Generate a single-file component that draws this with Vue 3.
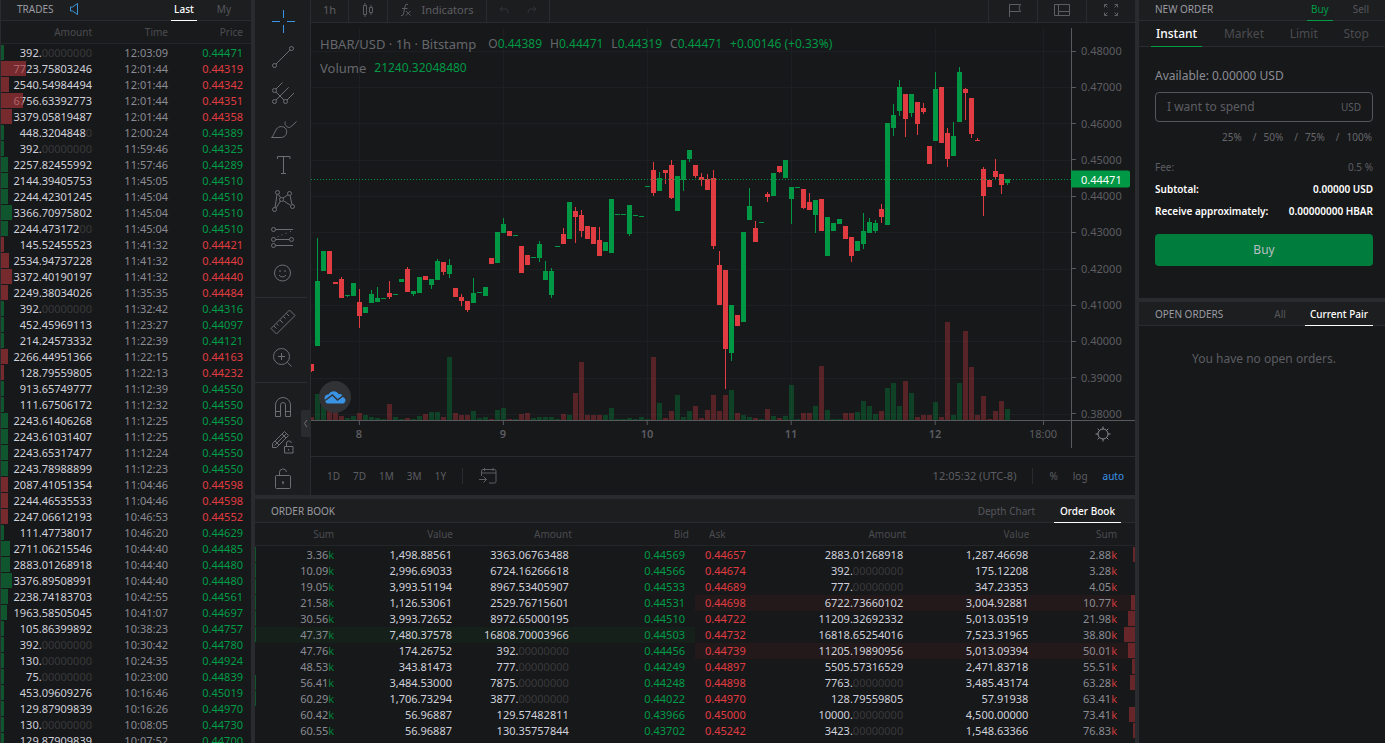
<script setup>
import { ref } from 'vue'

const spend = ref('')

const trades = `g 392.00000000 12:03:09 0.44471
r 7723.75803246 12:01:44 0.44319
r 2540.54984494 12:01:44 0.44342
r 6756.63392773 12:01:44 0.44351
r 3379.05819487 12:01:44 0.44358
g 448.32048480 12:00:24 0.44389
g 392.00000000 11:59:46 0.44325
g 2257.82455992 11:57:46 0.44289
g 2144.39405753 11:45:05 0.44510
g 2244.42301245 11:45:04 0.44510
g 3366.70975802 11:45:04 0.44510
g 2244.47317200 11:45:04 0.44510
r 145.52455523 11:41:32 0.44421
r 2534.94737228 11:41:32 0.44440
r 3372.40190197 11:41:32 0.44440
r 2249.38034026 11:35:35 0.44484
g 392.00000000 11:32:42 0.44316
g 452.45969113 11:23:27 0.44097
g 214.24573332 11:22:39 0.44121
r 2266.44951366 11:22:15 0.44163
r 128.79559805 11:22:13 0.44232
g 913.65749777 11:12:39 0.44550
g 111.67506172 11:12:32 0.44550
g 2243.61406268 11:12:25 0.44550
g 2243.61031407 11:12:25 0.44550
g 2243.65317477 11:12:24 0.44550
g 2243.78988899 11:12:23 0.44550
r 2087.41051354 11:04:46 0.44598
r 2244.46535533 11:04:46 0.44598
r 2247.06612193 10:46:53 0.44552
g 111.47738017 10:46:20 0.44629
g 2711.06215546 10:44:40 0.44485
g 2883.01268918 10:44:40 0.44480
g 3376.89508991 10:44:40 0.44480
g 2238.74183703 10:42:55 0.44561
g 1963.58505045 10:41:07 0.44697
g 105.86399892 10:38:23 0.44757
g 392.00000000 10:30:42 0.44780
g 130.00000000 10:24:35 0.44924
g 75.00000000 10:23:00 0.44839
g 453.09609276 10:16:46 0.45019
g 129.87909839 10:16:26 0.44970
g 130.00000000 10:08:05 0.44730
g 129.87909839 10:07:52 0.44700`.split('\n').map((line) => {
  const [side, amount, time, price] = line.split(' ')
  return { side, ...splitZeros(amount), time, price, bar: Math.max(3, Math.round(parseFloat(amount) / 307)) }
})

function splitZeros(text) {
  const [, lead, zeros] = text.match(/^(.*?)(0*)$/)
  return { lead, zeros }
}

const parseBook = (text) => text.split('\n').map((line) => {
  const [sum, value, amount, price, bar, hot] = line.split(' ')
  return { sum, value, ...splitZeros(amount), price, bar: Number(bar), hot: hot === '*' }
})

const bids = parseBook(`3.36 1,498.88561 3363.06763488 0.44569 1
10.09 2,996.69033 6724.16266618 0.44566 1
19.05 3,993.51194 8967.53405907 0.44533 1
21.58 1,126.53061 2529.76715601 0.44531 1
30.56 3,993.72652 8972.65000195 0.44510 1
47.37 7,480.37578 16808.70003966 0.44503 1 *
47.76 174.26752 392.00000000 0.44456 0
48.53 343.81473 777.00000000 0.44249 0
56.41 3,484.53000 7875.00000000 0.44248 1
60.29 1,706.73294 3877.00000000 0.44022 1
60.42 56.96887 129.57482811 0.43966 0
60.55 56.96887 130.35757844 0.43702 0`)

const asks = parseBook(`2.88 1,287.46698 2883.01268918 0.44657 2
3.28 175.12208 392.00000000 0.44674 0
4.05 347.23353 777.00000000 0.44689 0
10.77 3,004.92881 6722.73660102 0.44698 4 *
21.98 5,013.03519 11209.32692332 0.44722 7
38.80 7,523.31965 16818.65254016 0.44732 11
50.01 5,013.09394 11205.19890956 0.44739 7 *
55.51 2,471.83718 5505.57316529 0.44897 3
63.28 3,485.43174 7763.00000000 0.44898 5
63.41 57.91938 128.79559805 0.44970 0
73.41 4,500.00000 10000.00000000 0.45000 6
76.83 1,548.63366 3423.00000000 0.45242 2`)

// One entry per hour: side, wick top, body top, body bottom, wick bottom, volume height.
const candles = `r 364 364 371 372 3|g 238 281 346 346 26|g 251 251 271 271 22|r 251 251 274 274 12|r 282 282 284 284 8|r 277 279 298 298 4
g 295 295 296 297 2|g 283 283 296 296 4|r 289 302 316 328 7|g 307 307 313 313 5|g 290 294 303 303 3|g 287 298 302 302 2
g 298 298 299 299 1|r 281 293 297 299 16|g 294 294 295 295 3|g 279 279 282 282 1|r 267 269 292 292 2|g 291 291 294 296 1
g 277 277 293 293 4|r 276 276 280 280 6|g 279 279 285 289 8|g 259 261 280 280 8|r 262 262 272 275 3|g 259 265 274 278 63
r 288 288 297 297 7|r 294 297 301 306 5|r 301 301 310 312 5|g 278 293 303 303 9|g 292 292 293 293 2|g 287 287 296 296 3
r 258 258 264 264 1|g 232 232 263 263 10|g 218 224 233 233 12|r 231 231 236 236 1|g 235 235 236 236 1|r 246 246 273 273 6
r 255 255 265 265 7|g 257 257 258 258 2|g 241 244 258 262 3|g 261 271 280 280 3|g 268 271 295 298 3|g 246 246 247 247 1
r 228 234 244 244 6|g 202 202 239 239 5|r 207 211 217 243 27|r 210 215 231 237 58|r 226 226 239 239 5|r 227 227 244 244 5
r 227 240 256 256 5|g 242 242 251 251 5|g 199 199 253 253 12|g 214 214 215 215 1|g 214 214 215 215 1|g 205 205 234 236 2
g 215 215 216 216 1|g 216 216 217 217 3|g 186 186 187 187 1|r 162 170 193 196 63|g 172 178 191 191 17|r 170 170 173 184 2
r 160 165 198 199 9|g 176 176 211 211 25|g 160 160 180 191 3|g 150 150 159 162 9|r 165 165 176 178 14|r 173 177 180 186 2
r 174 179 190 190 10|r 170 178 246 249 25|r 251 265 305 305 9|r 270 270 349 389 25|g 305 305 353 361 30|r 315 315 326 326 7
g 232 232 322 322 5|g 188 206 220 220 3|r 221 228 242 242 2|g 222 222 223 223 1|r 192 194 197 202 11|g 173 173 196 196 4
r 166 166 172 173 2|g 160 160 178 178 4|g 187 187 199 224 35|g 187 187 188 188 1|r 189 189 208 209 7|r 193 202 210 210 7
g 200 200 215 233 14|r 199 199 231 231 54|g 217 217 256 256 10|g 223 223 231 231 1|g 219 219 224 224 1|r 226 226 239 239 7
r 237 237 256 262 7|g 241 241 251 251 8|g 213 231 244 249 19|g 218 222 233 233 14|g 220 223 231 233 6|r 204 209 217 223 9
g 123 123 225 225 32|g 104 115 128 136 37|g 80 87 111 116 14|r 94 94 119 137 39|g 94 94 113 117 27|r 102 102 124 135 3
r 103 108 112 114 5|r 146 146 164 164 5|g 72 89 141 141 18|r 87 87 143 143 3|r 128 133 159 167 98|g 122 136 156 156 5
g 67 72 122 122 37|r 88 89 93 120 89|r 98 98 134 138 53|r 138 140 141 141 5|r 167 169 196 216 24|r 180 180 187 187 1
r 159 171 177 179 9|r 174 174 185 194 19|g 179 179 183 185 11`.split(/[|\n]/).map((entry, i) => {
  const [side, high, top, bottom, low, volume] = entry.split(' ')
  return { x: 6 * i, side, high: +high - 23, top: +top - 23, bottom: +bottom - 23, low: +low - 23, volume: +volume }
})

const rows = [28, 64, 100, 137, 173, 209, 246, 282, 318, 355, 391]
const prices = ['0.48000', '0.47000', '0.46000', '0.45000', '0.44000', '0.43000', '0.42000', '0.41000', '0.40000', '0.39000', '0.38000']
const times = [
  { x: 48, label: '8', bold: true }, { x: 192, label: '9', bold: true }, { x: 336, label: '10', bold: true },
  { x: 480, label: '11', bold: true }, { x: 624, label: '12', bold: true }, { x: 732, label: '18:00', bold: false }
]
const plot = { width: 760, height: 397, last: 156 }

const circles = (list) => list.map(([x, y]) => `M${x - 2} ${y}a2 2 0 1 0 4 0a2 2 0 1 0-4 0`).join('')
const tools = [
  [
    { name: 'Cross', active: true, d: 'M3 14.5h8M18 14.5h8M14.5 3v8M14.5 18v8' },
    { name: 'Trend line', d: circles([[5.5, 22.5], [22.5, 5.5]]) + 'M7 21L21 7' },
    { name: 'Pitchfork', d: circles([[5.5, 11.5], [5.5, 22.5], [16.5, 22.5]]) + 'M7 10l6.5-6.5M7 21L19.7 8.3M18 21l7-7M7 13l8 8' },
    { name: 'Brush', d: 'M2.5 22.5C5 20 5.500 17 7.500 14C10 10.500 15 11 17 14C19 18 16.500 22 12.500 22.500zM16.500 6.500C15 9 17 12.500 20.500 12.500Q22 12 27.500 6.500' },
    { name: 'Text', d: 'M8.500 8V5.500H21V8M14.500 5.500V22.500M12 22.500h5' },
    { name: 'Pattern', d: circles([[8.5, 5.5], [20.5, 6.5], [12.5, 12.5], [23.5, 19.5], [5.5, 22.5]]) + 'M8 7.500L6 20.500M7 21L11.500 14M9.500 7.500L11.500 10.500M14 11L19 7.800M14.500 13.800L21.500 18.300M21 8.500L23 17.500' },
    { name: 'Forecast', d: circles([[4.5, 6.5], [4.5, 16.5], [22.5, 16.5], [4.5, 22.5]]) + 'M6.500 6.500H24M6.500 16.500H20.500M6.500 22.500H24M8.500 13.700l1-.4M12.500 12l1-.4M16.500 10.500l1-.4M21 8.800l1-.4' },
    { name: 'Icons', d: 'M5.500 14a8 8 0 1 0 16 0a8 8 0 1 0-16 0M11 11v2M16 11v2M10 16Q13.500 20 17 16' }
  ],
  [
    { name: 'Measure', d: 'M2 20.500L20.500 2L26 7.500L7.500 26zM7.500 15.500l2 2M11 12l3 3M14.500 8.500l2 2M17.500 5.500l2.500 2.500M5 18l2.500 2.500' },
    { name: 'Zoom in', d: 'M4.500 12.500a8 8 0 1 0 16 0a8 8 0 1 0-16 0M18.500 18.500l4 4M9 12.500h7M12.500 9v7' }
  ],
  [
    { name: 'Magnet', d: 'M6.500 23.500V12a7.500 7.500 0 0 1 15 0V23.500H16.500V12a2.500 2.500 0 0 0-5 0V23.500zM6.500 18.500h5M16.500 18.500h5' },
    { name: 'Keep drawing', d: 'M3.500 18.500V14.500L15.500 2.500L19.500 6.500L7.500 18.500zM6 12L10 16M5.500 16.500L17 5M13 5l4 4M15.500 17.500h8.500v6.500h-8.500zM17.500 17.500v-2.500a2.500 2.500 0 0 1 5-1M19.500 20v1.500' },
    { name: 'Lock', d: 'M6.500 11.500q0-1 1-1h13q1 0 1 1v11q0 1-1 1h-13q-1 0-1-1zM10.500 10.500V8a3.500 3.500 0 0 1 7-1M14 16v3.500M13 17.500h2' }
  ]
]
</script>

<template>
  <div class="app">
    <section class="panel trades">
      <header class="title">
        <h2>TRADES</h2>
        <button class="sound" aria-label="Sound">
          <svg width="10" height="12" viewBox="0 0 10 12"><path d="M8.500 .5L3.500 4H1.500V8H3.500L8.500 11.500z" /></svg>
        </button>
        <nav class="tabs">
          <button class="tab on">Last</button>
          <button class="tab my">My</button>
        </nav>
      </header>
      <table>
        <colgroup><col class="c-amount"><col class="c-time"><col></colgroup>
        <thead><tr><th>Amount</th><th>Time</th><th>Price</th></tr></thead>
        <tbody>
          <tr v-for="(t, i) in trades" :key="i">
            <td class="num">{{ t.lead }}<span class="zeros">{{ t.zeros }}</span><i class="bar" :class="t.side" :style="{ width: t.bar + 'px' }"></i></td>
            <td class="time">{{ t.time }}</td>
            <td :class="['price', t.side]">{{ t.price }}</td>
          </tr>
        </tbody>
      </table>
    </section>

    <main class="center">
      <section class="panel chart">
        <div class="tools">
          <div v-for="(group, g) in tools" :key="g" class="group">
            <button v-for="t in group" :key="t.name" :aria-label="t.name" :class="{ active: t.active }">
              <svg width="28" height="28" viewBox="0 0 28 28"><path :d="t.d" /></svg>
            </button>
          </div>
          <button class="collapse" aria-label="Hide toolbar"><svg width="5" height="9" viewBox="0 0 5 9"><path d="M4 1L1.500 4.500L4 8" /></svg></button>
        </div>

        <div class="work">
          <div class="topbar">
            <button class="interval">1h</button>
            <button class="style" aria-label="Candles">
              <svg width="12" height="16" viewBox="0 0 12 16"><path d="M1.500 3.500h3v9h-3zM3 1v2.500M3 12.500V15M7.500 5.500h3v5h-3zM9 3v2.500M9 10.500V13" /></svg>
            </button>
            <button class="indicators">
              <svg width="12" height="14" viewBox="0 0 12 14"><path d="M8 1.500Q5.500 0 5 3.500L3.500 11Q3 13.500 1 12.500M2 5.500h5.500M6 8l4.500 4.500M10.500 8L6 12.500" /></svg>
              <span>Indicators</span>
            </button>
            <div class="history">
              <button aria-label="Undo"><svg width="10" height="8" viewBox="0 0 10 8"><path d="M3.500 0.500L1 3L3.500 5.500M1 3h6q2 0 2 4" /></svg></button>
              <button aria-label="Redo"><svg width="10" height="8" viewBox="0 0 10 8"><path d="M6.500 0.500L9 3L6.500 5.500M9 3H3q-2 0-2 4" /></svg></button>
            </div>
            <div class="right-tools">
              <button aria-label="Flag"><svg width="16" height="16" viewBox="0 0 16 16"><path d="M4.500 15V2.500H15.500L14 6L15.500 9.500H4.500" /></svg></button>
              <button aria-label="Layout"><svg width="16" height="16" viewBox="0 0 16 16"><path d="M.5 2.500h15v11H.5zM4.500 2.500v11M4.500 9.500h11" /></svg></button>
              <button aria-label="Fullscreen"><svg width="16" height="16" viewBox="0 0 16 16"><path d="M1.500 5.500v-3h3M1.500 2.500l3 3M14.500 5.500v-3h-3M14.500 2.500l-3 3M1.500 10.500v3h3M1.500 13.500l3-3M14.500 10.500v3h-3M14.500 13.500l-3-3" /></svg></button>
            </div>
          </div>

          <div class="canvas">
            <div class="plot">
              <svg class="drawing" :viewBox="`0 0 ${plot.width} ${plot.height}`" preserveAspectRatio="none" role="img" aria-label="HBAR/USD candles">
                <g class="grid">
                  <rect v-for="y in rows" :key="'h' + y" x="0" :y="y" :width="plot.width" height="1" />
                  <rect v-for="t in times" :key="'v' + t.x" :x="t.x" y="5" width="1" :height="plot.height" />
                </g>
                <g v-for="c in candles" :key="c.x" :class="c.side">
                  <rect class="volume" :x="c.x - 2" :y="plot.height - c.volume" width="5" :height="c.volume" />
                  <rect :x="c.x" :y="c.high" width="1" :height="c.low - c.high" />
                  <rect :x="c.x - 2" :y="c.top" width="5" :height="c.bottom - c.top" />
                </g>
                <line class="last" x1="0" :x2="plot.width" :y1="plot.last + 0.5" :y2="plot.last + 0.5" />
              </svg>
              <div class="legend">
                <p><span class="pair">HBAR/USD · 1h · Bitstamp</span><span>O<b>0.44389</b></span><span>H<b>0.44471</b></span><span>L<b>0.44319</b></span><span>C<b>0.44471</b></span><b>+0.00146 (+0.33%)</b></p>
                <p><span class="vol">Volume</span><b>21240.32048480</b></p>
              </div>
              <a class="brand" href="#" aria-label="TradingView">
                <svg width="22" height="14" viewBox="0 0 22 14"><path fill="#3a94e6" d="M1 10C-.5 7 2 4 4.500 4.500C6 1 12-.5 14.500 4C18 3.500 19 6 18.500 7C22 7.500 22.500 12 19.500 13.500H3Q1 13 1 10z" /><path fill="none" stroke="#303236" stroke-width="1.500" d="M1 10.500L8.500 5L13.500 10L20 5" /></svg>
              </a>
            </div>
            <div class="prices">
              <ul><li v-for="p in prices" :key="p">{{ p }}</li></ul>
              <span class="tag" :style="{ top: (plot.last / plot.height) * 100 + '%' }">0.44471</span>
            </div>
            <div class="times">
              <span v-for="t in times" :key="t.x" :class="{ bold: t.bold }" :style="{ left: (t.x / plot.width) * 100 + '%' }">{{ t.label }}</span>
            </div>
            <div class="corner">
              <button aria-label="Chart settings"><svg width="16" height="16" viewBox="0 0 16 16"><circle cx="8" cy="8" r="5" /><path d="M8 .5v2.500M8 13v2.500M.5 8H3M13 8h2.500M2.700 2.700l1.800 1.800M11.500 11.500l1.800 1.800M2.700 13.300l1.800-1.800M11.500 4.500l1.800-1.800" /></svg></button>
            </div>
          </div>

          <div class="footbar">
            <div class="ranges"><button v-for="r in ['1D', '7D', '1M', '3M', '1Y']" :key="r">{{ r }}</button></div>
            <button class="goto" aria-label="Go to date"><svg width="18" height="18" viewBox="0 0 18 18"><path d="M2.500 9V4q0-1.500 1.500-1.500H15.500Q17 2.500 17 4V14.500Q17 16 15.500 16H10M2.500 6h14.500M5.500 1v3M14 1v3M0 12.500h7M4.500 9.500l3 3l-3 3" /></svg></button>
            <button class="clock">12:05:32 (UTC-8)</button>
            <div class="scales"><button>%</button><button>log</button><button class="auto">auto</button></div>
          </div>
        </div>
      </section>

      <section class="panel book">
        <header class="title">
          <h2>ORDER BOOK</h2>
          <nav class="tabs">
            <button class="tab">Depth Chart</button>
            <button class="tab on">Order Book</button>
          </nav>
        </header>
        <div class="halves">
          <table class="bids">
            <colgroup><col class="b1"><col class="b2"><col class="b3"><col class="b4"></colgroup>
            <thead><tr><th>Sum</th><th>Value</th><th>Amount</th><th>Bid</th></tr></thead>
            <tbody>
              <tr v-for="b in bids" :key="b.price" :class="{ hot: b.hot }">
                <td class="sum">{{ b.sum }}<span class="g">k</span><i class="bar g" :style="{ width: b.bar + 'px' }"></i></td>
                <td class="num">{{ b.value }}</td>
                <td class="num">{{ b.lead }}<span class="zeros">{{ b.zeros }}</span></td>
                <td class="price g">{{ b.price }}</td>
              </tr>
            </tbody>
          </table>
          <table class="asks">
            <colgroup><col class="a1"><col class="a2"><col class="a3"><col class="a4"></colgroup>
            <thead><tr><th>Ask</th><th>Amount</th><th>Value</th><th>Sum</th></tr></thead>
            <tbody>
              <tr v-for="a in asks" :key="a.price" :class="{ hot: a.hot }">
                <td class="price r">{{ a.price }}</td>
                <td class="num">{{ a.lead }}<span class="zeros">{{ a.zeros }}</span></td>
                <td class="num">{{ a.value }}</td>
                <td class="sum">{{ a.sum }}<span class="r">k</span><i class="bar r" :style="{ width: a.bar + 'px' }"></i></td>
              </tr>
            </tbody>
          </table>
        </div>
      </section>
    </main>

    <aside class="side">
      <section class="panel order">
        <header class="title">
          <h2>NEW ORDER</h2>
          <nav class="tabs">
            <button class="tab buy">Buy</button>
            <button class="tab sell">Sell</button>
          </nav>
        </header>
        <nav class="kinds">
          <button class="on">Instant</button><button>Market</button><button>Limit</button><button>Stop</button>
        </nav>
        <form @submit.prevent>
          <label for="spend">Available: 0.00000 USD</label>
          <div class="field"><input id="spend" v-model="spend" placeholder="I want to spend"><span>USD</span></div>
          <div class="percent"><button type="button">25%</button><i>/</i><button type="button">50%</button><i>/</i><button type="button">75%</button><i>/</i><button type="button">100%</button></div>
          <dl>
            <div class="fee"><dt>Fee:</dt><dd>0.5 %</dd></div>
            <div><dt>Subtotal:</dt><dd>0.00000 USD</dd></div>
            <div><dt>Receive approximately:</dt><dd>0.00000000 HBAR</dd></div>
          </dl>
          <button class="submit">Buy</button>
        </form>
      </section>
      <section class="panel open">
        <header class="title">
          <h2>OPEN ORDERS</h2>
          <nav class="tabs">
            <button class="tab">All</button>
            <button class="tab on">Current Pair</button>
          </nav>
        </header>
        <p class="empty">You have no open orders.</p>
      </section>
    </aside>
  </div>
</template>

<style>
body { background: #2a2b2f; }
</style>

<style scoped>
* { box-sizing: border-box; margin: 0; }
.app {
  display: grid;
  grid-template-columns: 250px minmax(0, 1fr) 246px;
  gap: 4px;
  padding-left: 1px;
  height: 100vh;
  overflow: hidden;
  background: #2a2b2f;
  color: #8b8c93;
  font: 11px/16px "Noto Sans", "Open Sans", sans-serif;
}
button { padding: 0; border: 0; background: none; color: inherit; font: inherit; cursor: pointer; }
svg { display: block; fill: none; stroke: currentColor; }
.panel { background: #17181a; overflow: hidden; min-width: 0; }
.center, .side { display: flex; flex-direction: column; gap: 4px; min-width: 0; min-height: 0; }
.book, .open { flex: 1; min-height: 0; }

.title { display: flex; align-items: center; height: 24px; padding-left: 16px; background: #1d1e20; border-bottom: 1px solid #2a2b2e; }
.trades .title, .order .title { height: 21px; }
.trades .title > h2, .trades .sound, .order .title > h2 { padding-bottom: 2px; }
.title h2 { font-size: 10px; font-weight: 400; color: #9a9ba2; }
.tabs { display: flex; align-self: stretch; margin: 0 12px -1px auto; gap: 14px; }
.tab { padding: 0 5px; border-bottom: 1px solid transparent; color: #56575c; font-size: 10px; }
.tab.on { color: #fff; font-weight: 500; border-color: #fff; }
.book .tab.on { padding: 0 6px; }
.book .tabs { margin-right: 14px; }
.trades .tabs { margin-right: 20px; gap: 20px; }
.trades .tab { padding: 0 0 2px; }
.trades .tab.on { padding: 0 3px 2px; }
.sound { margin-left: 15px; color: #3a94d8; }

table { width: 100%; table-layout: fixed; border-collapse: separate; border-spacing: 0; }
th { height: 23px; padding: 0; border-bottom: 1px solid #242528; background: #191a1c; color: #4b4c50; font-size: 10px; font-weight: 400; text-align: right; }
tbody::before { content: ""; display: block; height: 1px; }
td { position: relative; height: 16px; padding: 0; text-align: right; line-height: 16px; }
.num { color: #d0d1da; }
.zeros { color: #37383b; }
.time, .sum { color: #8a8b92; }
.price.g { color: #009c46; }
.price.r { color: #e03c42; }
.trades .c-amount { width: 91px; }
.trades .c-time { width: 76px; }
.trades th:last-child, .trades td:last-child { padding-right: 8px; }
.bar { position: absolute; left: 0; top: 0; height: 15px; }
.bar.g { background: rgba(14, 105, 52, .75); }
.bar.r { background: rgba(160, 50, 56, .7); }

.halves { display: grid; grid-template-columns: 1fr 1fr; }
.sum .g { color: #00803a; }
.sum .r { color: #c8383d; }
.b1 { width: 18%; } .b2 { width: 27%; } .b3 { width: 27%; }
.bids th:last-child { padding-right: 6px; }
.bids td:last-child { padding-right: 10px; }
.bids td:nth-child(2) { padding-right: 1px; }
.bids td:nth-child(3) { padding-right: 3px; }
.a1 { width: 14%; } .a2 { width: 34%; } .a3 { width: 28%; }
.asks td:nth-child(2) { padding-right: 3px; }
.asks td:nth-child(3) { padding-right: 1px; }
.asks th:first-child { text-align: left; padding-left: 14px; }
.asks td:first-child { text-align: left; padding-left: 10px; }
.asks th:last-child, .asks td:last-child { padding-right: 18px; }
.asks .bar { left: auto; right: 0; background: rgba(138, 44, 49, .7); }
.bids .hot { background: #16201b; }
.asks .hot { background: #23191b; }

.chart { display: flex; flex: 0 0 auto; height: 495px; }
.tools { position: relative; flex: 0 0 56px; padding-top: 3px; overflow: hidden; border-right: 1px solid #2a2b2e; background: #1c1d1f; color: #6d6e74; }
.group { display: flex; flex-direction: column; width: 52px; padding-bottom: 6px; margin-bottom: 6px; border-bottom: 1px solid #2d2e31; }
.group:nth-child(3) { border-bottom: 0; }
.group button { display: flex; align-items: center; justify-content: center; width: 56px; height: 36px; }
.group .active { color: #3a94e6; }
.collapse { position: absolute; right: 0; top: 410px; display: flex; align-items: center; justify-content: center; width: 9px; height: 27px; background: #2a2b2f; border-radius: 2px 0 0 2px; }
.work { display: flex; flex: 1; flex-direction: column; min-width: 0; }
.topbar { display: flex; height: 23px; background: #1c1d1f; border-bottom: 1px solid #2a2b2e; color: #5c5d62; font-size: 11px; }
.topbar > *, .right-tools button { display: flex; align-items: center; justify-content: center; }
.topbar > button, .history { border-right: 1px solid #2a2b2e; padding-bottom: 3px; }
.interval { width: 38px; }
.style { width: 39px; }
.indicators { width: 99px; gap: 9px; }
.history { width: 63px; gap: 18px; color: #333438; }
.right-tools { margin-left: auto; }
.right-tools button { width: 49px; height: 22px; padding-bottom: 2px; border-left: 1px solid #2a2b2e; }

.canvas { display: grid; grid-template-columns: minmax(0, 1fr) 64px; grid-template-rows: minmax(0, 1fr) 36px; flex: 1; min-height: 0; color: #5c5d62; font-size: 11px; }
.plot { position: relative; min-height: 0; overflow: hidden; }
.drawing { width: 100%; height: 100%; stroke: none; shape-rendering: crispEdges; }
.grid { fill: #1e1f22; }
.drawing .g { fill: #009845; }
.drawing .r { fill: #e03c42; }
.drawing .volume { opacity: .32; }
.drawing .last { stroke: #079448; stroke-dasharray: 1 2; }
.legend { position: absolute; left: 9px; top: 12px; color: #66676c; font-size: 12px; }
.legend p { display: flex; align-items: center; gap: 8px; height: 18px; margin-bottom: 6px; white-space: nowrap; }
.legend .pair { margin-right: 4px; font-size: 13px; }
.legend .vol { font-size: 13px; }
.legend b { font-weight: 400; color: #009845; }
.brand { position: absolute; left: 8px; bottom: 7px; display: flex; align-items: center; justify-content: center; width: 32px; height: 32px; border-radius: 50%; background: #303236; }
.brand svg { stroke: none; }
.prices { position: relative; padding-top: 22px; background: linear-gradient(#58595f, #58595f) 0 5px / 1px 100% no-repeat; }
.prices ul { display: flex; flex-direction: column; justify-content: space-between; height: 100%; padding: 0; list-style: none; }
.prices li { display: flex; align-items: center; gap: 5px; line-height: 12px; }
.prices li::before { content: ""; width: 5px; height: 1px; background: #58595f; }
.tag { position: absolute; left: 0; width: 59px; height: 17px; padding-left: 10px; border-radius: 0 2px 2px 0; background: #009845; color: #fff; line-height: 17px; transform: translateY(-50%); }
.times, .corner { position: relative; border-top: 1px solid #58595f; }
.times span { position: absolute; top: 5px; transform: translateX(-50%); }
.times span::before { content: ""; position: absolute; left: 50%; top: -5px; width: 1px; height: 4px; background: #58595f; }
.times .bold { font-weight: 600; }
.corner { padding: 5px 24px; background: linear-gradient(#58595f, #58595f) 0 0 / 1px 27px no-repeat; color: #8a8b90; }

.footbar { display: flex; align-items: center; height: 39px; border-top: 1px solid #2a2b2e; padding: 0 11px 0 16px; color: #5c5d62; font-size: 10px; }
.ranges { display: flex; gap: 13px; padding-right: 16px; border-right: 1px solid #2a2b2e; }
.goto { margin-left: 16px; }
.clock { margin-left: auto; padding-right: 16px; border-right: 1px solid #2a2b2e; font-size: 11px; }
.scales { display: flex; gap: 15px; padding-left: 16px; }
.auto { color: #3a94e6; }

.order .tab { padding: 0 4px 2px; }
.order .tabs { gap: 16px; }
.tab.buy { color: #009c46; border-color: #009c46; }
.kinds { display: flex; justify-content: space-between; height: 26px; padding: 0 12px; border-bottom: 1px solid #2a2b2e; background: #1a1b1d; color: #4b4c50; font-size: 12px; }
.kinds button { margin-bottom: -1px; padding: 0 4px; border-bottom: 1px solid transparent; }
.kinds .on { padding: 0 5px; color: #fff; font-weight: 500; border-color: #009c46; }
form { display: flex; flex-direction: column; padding: 21px 12px 32px 16px; }
form label { font-size: 12px; line-height: 16px; margin: 0 0 8px; }
.field { display: flex; align-items: center; height: 30px; padding: 0 11px; border: 1px solid #55565b; border-radius: 4px; color: #5c5d62; }
.field input { flex: 1; min-width: 0; padding: 0; border: 0; outline: 0; background: none; color: #d0d1da; font: 12px/16px "Noto Sans", sans-serif; }
.field input::placeholder { color: #5c5d62; opacity: 1; }
.field span { font-size: 10px; }
.percent { display: flex; justify-content: flex-end; gap: 7px; margin-top: 7px; padding-right: 1px; color: #66676c; font-size: 10px; }
.percent i { font-style: normal; padding-left: 4px; }
dl { margin-top: 14px; color: #fff; font-size: 10px; font-weight: 600; }
dl div { display: flex; justify-content: space-between; margin-bottom: 6px; }
dl .fee { color: #5c5d62; font-weight: 400; }
.submit { height: 32px; margin-top: 9px; border-radius: 4px; background: #007d3c; color: #b9bfc4; font-size: 12px; }
.empty { margin-top: 25px; padding: 0 12px 0 16px; color: #5c5d62; font-size: 12px; text-align: center; }
</style>
